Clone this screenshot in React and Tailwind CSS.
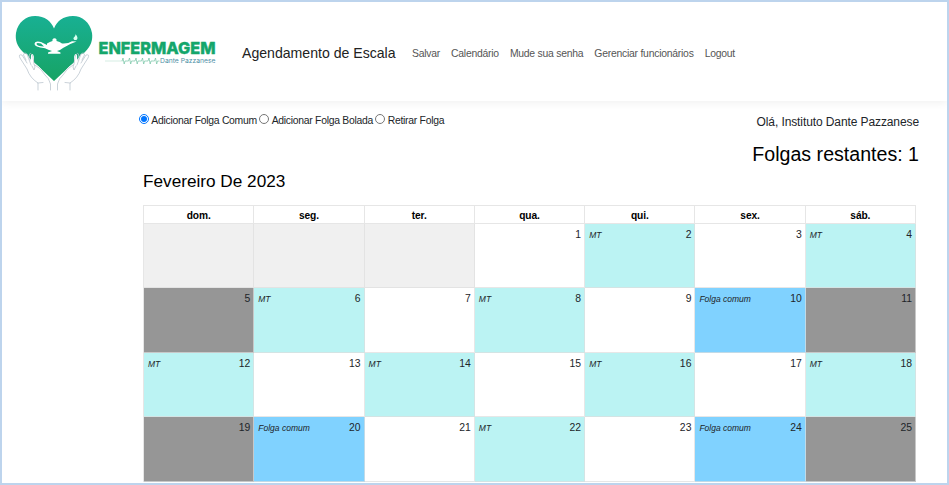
import React, { useState } from 'react';

const navLinks = ['Salvar', 'Calendário', 'Mude sua senha', 'Gerenciar funcionários', 'Logout'];

const modes = [
  { id: 'comum', label: 'Adicionar Folga Comum' },
  { id: 'bolada', label: 'Adicionar Folga Bolada' },
  { id: 'retirar', label: 'Retirar Folga' },
];

const weekDays = ['dom.', 'seg.', 'ter.', 'qua.', 'qui.', 'sex.', 'sáb.'];

// Fevereiro de 2023 começa numa quarta-feira
const days = [null, null, null, ...Array.from({ length: 25 }, (_, i) => i + 1)];

const shifts = {
  MT: [2, 4, 6, 8, 12, 14, 16, 18, 22],
  'Folga comum': [10, 20, 24],
};
const blocked = [5, 11, 19, 25];

const getShift = (day) => Object.keys(shifts).find((key) => shifts[key].includes(day));

const getDayColor = (day) => {
  if (!day) return 'bg-[#f0f0f0]';
  if (blocked.includes(day)) return 'bg-[#969696]';
  const colors = {
    MT: 'bg-[#bbf3f3]',
    'Folga comum': 'bg-[#80d2ff]',
  };
  return colors[getShift(day)] || 'bg-white';
};

const Hand = () => (
  <g strokeLinecap="round" strokeLinejoin="round">
    <path
      fill="#fff"
      d="M24 68 Q17 63 13 54 L6 43 Q4 39 8 40 L12 45 L10 40 Q11 37 14 40 L17 47 L17 40 Q19 37 20 42 L20 48 Q28 53 31 60 Q36 63 37 69 V76 H24 Z"
    />
    <path
      fill="none"
      stroke="#b3bfc9"
      strokeWidth="0.7"
      d="M24 75 V68 Q16 63 13 54 L6 43 Q4 39 8 40 L13 48 M12 45 L9.5 40 Q10 36.5 13 39 L17 50 M16 45 L15.5 39 Q17 37 19 42 L20 49 Q22 52 20 55 L18 51 M36.5 75 V69 Q35 63 31 60 Q27 53 21 50 M24 68 L29 67.5"
    />
  </g>
);

const Logo = () => (
  <div className="flex h-[82px] w-[204px] items-center" role="img" aria-label="Enfermagem Dante Pazzanese">
    <svg className="h-[82px] w-[80px] shrink-0" viewBox="0 0 80 82">
      <defs>
        <linearGradient id="heart" x1="0" y1="0" x2="0" y2="1">
          <stop offset="0" stopColor="#18b093" />
          <stop offset="1" stopColor="#17a364" />
        </linearGradient>
      </defs>
      <path
        fill="url(#heart)"
        d="M40 66 L9 37 C3 31 1 25 2 18 C4 7 12 1 21 1 C31 1 37 6 40 13.5 C43 6 49 1 59 1 C68 1 76 7 78 18 C79 25 77 31 71 37 Z"
      />
      <Hand />
      <g transform="translate(80 0) scale(-1 1)">
        <Hand />
      </g>
      {/* Lâmpada */}
      <path
        fill="#fff"
        fillRule="evenodd"
        d="M33 28.5 Q36 26.5 38.5 26 Q38 23.5 40.5 23.3 Q43 23.5 42.5 26 Q46 26.5 48 28.5 Q54 29 58 26.2 L62.5 26.5 Q55 29 49 33 Q46 35.5 43 36 L46.5 37.5 V38.8 H34 V37.5 L38 36 Q34 35 31 33.2 Q20 32 20.5 28.8 Q21 25.5 27 27 L33 30 Z M30 31.5 L27 28.6 Q22.5 27.3 22.5 29 Q23 31 30 31.5 Z"
      />
      <path fill="#d9fff1" d="M60.5 25 Q58.5 23.5 60.3 22 Q61.8 21 61.3 19.3 Q64.5 22 63 24.5 Q62 25.3 60.5 25 Z" />
    </svg>
    <div className="ml-[4px] w-[119px] pb-[4px]">
      <svg className="block h-[20px] w-[119px] overflow-visible" viewBox="0 0 119 20">
        <text
          x="0.5"
          y="16"
          textLength="117"
          lengthAdjust="spacingAndGlyphs"
          fill="#14a66b"
          stroke="#14a66b"
          strokeWidth="0.4"
          fontSize="16.2"
          fontWeight="800"
          fontFamily="Inter, sans-serif"
        >
          ENFERMAGEM
        </text>
      </svg>
      <svg className="block h-[11px] w-[119px] overflow-visible" viewBox="0 0 119 11">
        <path fill="none" stroke="#a9d9c6" strokeWidth="0.5" d="M7 3 H25" />
        <path
          fill="none"
          stroke="#72c3a4"
          strokeWidth="0.7"
          d="M24 3 l1 -3 1.2 6 .8 -3 h3.5 l1 -3 1.2 6 .8 -3 h3.5 l1 -3 1.2 6 .8 -3 h3.5 l1 -3 1.2 6 .8 -3 h3.5 l1 -3 1.2 6 .8 -3 h3.5 l1 -3 1.2 6 .8 -3 h2"
        />
        <text
          x="62"
          y="5.2"
          textLength="55.5"
          lengthAdjust="spacingAndGlyphs"
          fill="#4f8fa6"
          fontSize="6.7"
          fontFamily="Inter, sans-serif"
        >
          Dante Pazzanese
        </text>
      </svg>
    </div>
  </div>
);

const Header = () => (
  <header className="relative flex h-[99px] shrink-0 items-center bg-white pl-3 shadow-[0_2px_8px_rgba(0,0,0,0.06)]">
    <div className="pt-[8px]">
      <Logo />
    </div>
    <h1 className="ml-6 w-[154px] whitespace-nowrap pt-[5px] text-[14.1px] text-[#222]">Agendamento de Escala</h1>
    <nav className="ml-4 flex gap-[11px] whitespace-nowrap pt-[4px] text-[10.4px] tracking-[-0.24px] text-[#555]">
      {navLinks.map((link) => (
        <a key={link} href="#">
          {link}
        </a>
      ))}
    </nav>
  </header>
);

const App = () => {
  const [mode, setMode] = useState('comum');

  return (
    <div className="flex h-[485px] w-[949px] flex-col overflow-hidden border-2 border-[#bdd4ed] bg-white font-['Liberation_Sans',Arial,sans-serif] text-[#212529]">
      <Header />

      <main className="pl-[137px] pr-7">
        <div className="flex h-[68px] items-start justify-between">
          <div className="flex items-start pt-[13px] text-[10.4px] leading-[14px] tracking-[-0.28px]">
            {modes.map(({ id, label }) => (
              <label key={id} className="mr-[2.5px] flex items-start whitespace-nowrap">
                <input
                  type="radio"
                  name="mode"
                  className="mr-[2.3px] size-[10px]"
                  checked={mode === id}
                  onChange={() => setMode(id)}
                />
                {label}
              </label>
            ))}
          </div>
          <div className="whitespace-nowrap pt-[13px] text-right">
            <p className="text-[12px] leading-4 tracking-[-0.1px]">Olá, Instituto Dante Pazzanese</p>
            <p className="mt-[12px] text-[19.6px] leading-6 text-black">Folgas restantes: 1</p>
          </div>
        </div>

        <h2 className="ml-1 flex h-9 items-start text-[17.2px] leading-6 text-black">Fevereiro De 2023</h2>

        <div className="ml-1 w-[773px] border-l border-t border-[#e6e6e6]">
          <div className="grid grid-cols-7">
            {weekDays.map((day) => (
              <div
                key={day}
                className="h-[17.7px] border-b border-r border-[#e6e6e6] text-center text-[10.2px] font-bold leading-[19px] tracking-[-0.1px] text-black"
              >
                {day}
              </div>
            ))}
          </div>
          <div className="grid grid-cols-7">
            {days.map((day, index) => (
              <div
                key={index}
                className={`flex h-[64.5px] items-start justify-between border-b border-r border-[#ddd]/70 pl-[2px] pr-[3px] pt-[4px] leading-[14px] ${getDayColor(day)}`}
              >
                <span className="pl-[2px] text-[8.5px] italic">{getShift(day)}</span>
                <span className="text-[10.4px]">{day}</span>
              </div>
            ))}
          </div>
        </div>
      </main>
    </div>
  );
};

export default App;
